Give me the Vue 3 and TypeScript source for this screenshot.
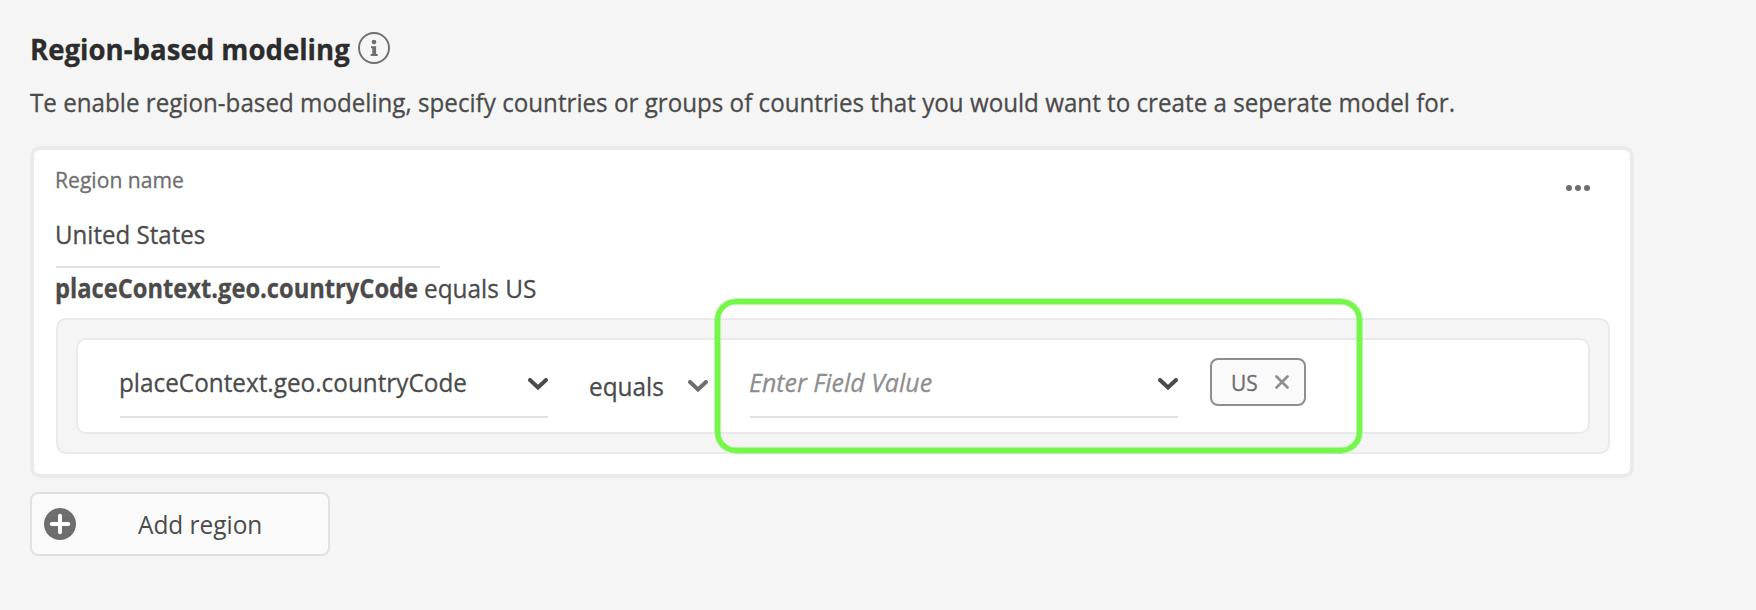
<script setup lang="ts">
import { ref } from 'vue'

const regionName = ref('United States')
const fieldName = ref('placeContext.geo.countryCode')
const operator = ref('equals')
const values = ref<string[]>(['US'])

function removeValue(value: string) {
  values.value = values.value.filter((v) => v !== value)
}
</script>

<template>
  <main class="page">
    <header class="heading">
      <h2 class="t">Region-based modeling</h2>
      <svg class="info" viewBox="0 0 32 32" width="32" height="32">
        <circle cx="16" cy="16" r="15" fill="none" stroke="#6e6e6e" stroke-width="1.9" />
        <circle cx="16" cy="10" r="2.3" fill="#6e6e6e" />
        <path d="M13 14.3h5.1v7.8h1.6v1.9h-7v-1.9h1.6v-5.9H13z" fill="#6e6e6e" />
      </svg>
    </header>
    <p class="description t">Te enable region-based modeling, specify countries or groups of countries that you would want to create a seperate model for.</p>

    <section class="card">
      <svg class="more" viewBox="0 0 24 6" width="24" height="6">
        <circle cx="3" cy="3" r="3" />
        <circle cx="12" cy="3" r="3" />
        <circle cx="21" cy="3" r="3" />
      </svg>
      <div class="label t">Region name</div>
      <div class="name"><span class="name-text t">{{ regionName }}</span></div>
      <p class="summary"><b class="t">{{ fieldName }}</b><span class="t">{{ operator }} {{ values.join(', ') }}</span></p>

      <div class="group">
        <div class="rule">
          <div class="field">
            <span class="field-text t">{{ fieldName }}</span>
            <svg class="chevron" viewBox="0 0 20 12" width="20" height="12"><path d="M2 2l8 7.5L18 2" /></svg>
          </div>
          <div class="operator">
            <span class="t">{{ operator }}</span>
            <svg class="chevron light" viewBox="0 0 20 12" width="20" height="12"><path d="M2 2l8 7.5L18 2" /></svg>
          </div>
          <div class="field value">
            <span class="placeholder t">Enter Field Value</span>
            <svg class="chevron" viewBox="0 0 20 12" width="20" height="12"><path d="M2 2l8 7.5L18 2" /></svg>
          </div>
          <div v-for="value in values" :key="value" class="chip">
            <span class="t">{{ value }}</span>
            <svg viewBox="0 0 14 14" width="14" height="14" @click="removeValue(value)"><path d="M1.5 1.5l11 11M12.5 1.5l-11 11" /></svg>
          </div>
        </div>
        <div class="highlight"></div>
      </div>
    </section>

    <button class="add" type="button">
      <svg viewBox="0 0 32 32" width="32" height="32">
        <circle cx="16" cy="16" r="16" fill="#6e6e6e" />
        <path d="M16 7.8v16.4M7.8 16h16.4" stroke="#fff" stroke-width="4" stroke-linecap="round" />
      </svg>
      <span class="t">Add region</span>
    </button>
  </main>
</template>

<style>
body {
  background: #f5f5f5;
}
</style>

<style scoped>
.page {
  box-sizing: border-box;
  width: 1756px;
  height: 610px;
  padding: 31px 0 0 30px;
  background: #f5f5f5;
  color: #4b4b4b;
  font-family: "Open Sans", "Noto Sans", sans-serif;
  font-size: 26px;
  line-height: 36px;
  white-space: nowrap;
}
/* Slightly narrowed letterforms */
.t {
  --narrow: 0.938;
  transform: scaleX(var(--narrow));
  transform-origin: 0 50%;
  -webkit-text-stroke: 0.3px currentColor;
}
.heading {
  display: flex;
  gap: 7px;
  height: 36px;
}
h2 {
  width: 321px;
  margin: 0;
  color: #2c2c2c;
  font-size: 29px;
  font-weight: 700;
}
h2.t {
  --narrow: 0.951;
}
.info {
  margin-top: 1px;
}
.description {
  margin: 17px 0 0;
}
.description.t {
  --narrow: 0.93;
}
.card {
  position: relative;
  box-sizing: border-box;
  width: 1604px;
  height: 332px;
  margin-top: 26px;
  padding: 14px 20px 20px 22px;
  border: 4px solid #eaeaea;
  border-radius: 10px;
  background: #fff;
}
.more {
  position: absolute;
  top: 35px;
  right: 40px;
  fill: #6e6e6e;
}
.label {
  margin-left: -1px;
  color: #6e6e6e;
  font-size: 22px;
  line-height: 30px;
}
.label.t {
  --narrow: 0.96;
}
.name {
  width: 384px;
  height: 50px;
  margin-top: 22px;
  border-bottom: 2px solid #e1e1e1;
}
.name-text {
  display: block;
  margin-left: -1px;
}
.name-text.t {
  --narrow: 0.926;
}
.summary {
  display: flex;
  margin: 2px 0 0 -1px;
}
.summary b {
  width: 369px;
}
.summary b.t {
  --narrow: 0.911;
}
.group {
  position: relative;
  box-sizing: border-box;
  width: 1554px;
  height: 136px;
  margin-top: 12px;
  padding: 18px;
  border: 2px solid #eaeaea;
  border-radius: 10px;
  background: #f5f5f5;
}
.rule {
  display: flex;
  align-items: flex-start;
  box-sizing: border-box;
  height: 96px;
  padding-left: 42px;
  border: 2px solid #eaeaea;
  border-radius: 10px;
  background: #fff;
}
.field {
  display: flex;
  justify-content: space-between;
  box-sizing: border-box;
  width: 428px;
  height: 54px;
  margin-top: 24px;
  border-bottom: 2px solid #e1e1e1;
}
.field-text {
  margin-left: -1px;
}
.field-text.t {
  --narrow: 0.935;
}
.chevron {
  margin-top: 14px;
  fill: none;
  stroke: #4b4b4b;
  stroke-width: 4;
  stroke-linecap: round;
}
.chevron.light {
  margin-top: 12px;
  stroke: #6e6e6e;
}
.operator {
  display: flex;
  justify-content: space-between;
  width: 119px;
  margin: 28px 0 0 41px;
}
.value {
  margin-left: 42px;
}
.placeholder {
  margin-left: -1px;
  color: #8e8e8e;
  font-style: italic;
}
.placeholder.t {
  --narrow: 0.96;
}
.chip {
  display: flex;
  align-items: center;
  justify-content: space-between;
  box-sizing: border-box;
  width: 96px;
  height: 48px;
  margin: 18px 0 0 32px;
  padding: 0 15px 0 19px;
  border: 2px solid #8e8e8e;
  border-radius: 8px;
  background: #fafafa;
  color: #6e6e6e;
  font-size: 22px;
  line-height: 30px;
}
.chip .t {
  --narrow: 0.95;
}
.chip svg {
  stroke: #8e8e8e;
  stroke-width: 2.6;
  stroke-linecap: round;
}
.highlight {
  position: absolute;
  top: -21px;
  left: 657px;
  box-sizing: border-box;
  width: 647px;
  height: 154px;
  border: 5px solid #74f74b;
  border-radius: 21px;
  box-shadow: 0 0 0 0.5px #74f74b, inset 0 0 0 0.5px #74f74b;
}
.add {
  display: flex;
  align-items: center;
  box-sizing: border-box;
  width: 300px;
  height: 64px;
  margin-top: 14px;
  padding: 0 0 0 12px;
  border: 2px solid #e1e1e1;
  border-radius: 8px;
  background: #fafafa;
  color: #4b4b4b;
  font: inherit;
}
.add span {
  margin-left: 62px;
}
.add .t {
  -webkit-text-stroke-width: 0;
}
</style>
